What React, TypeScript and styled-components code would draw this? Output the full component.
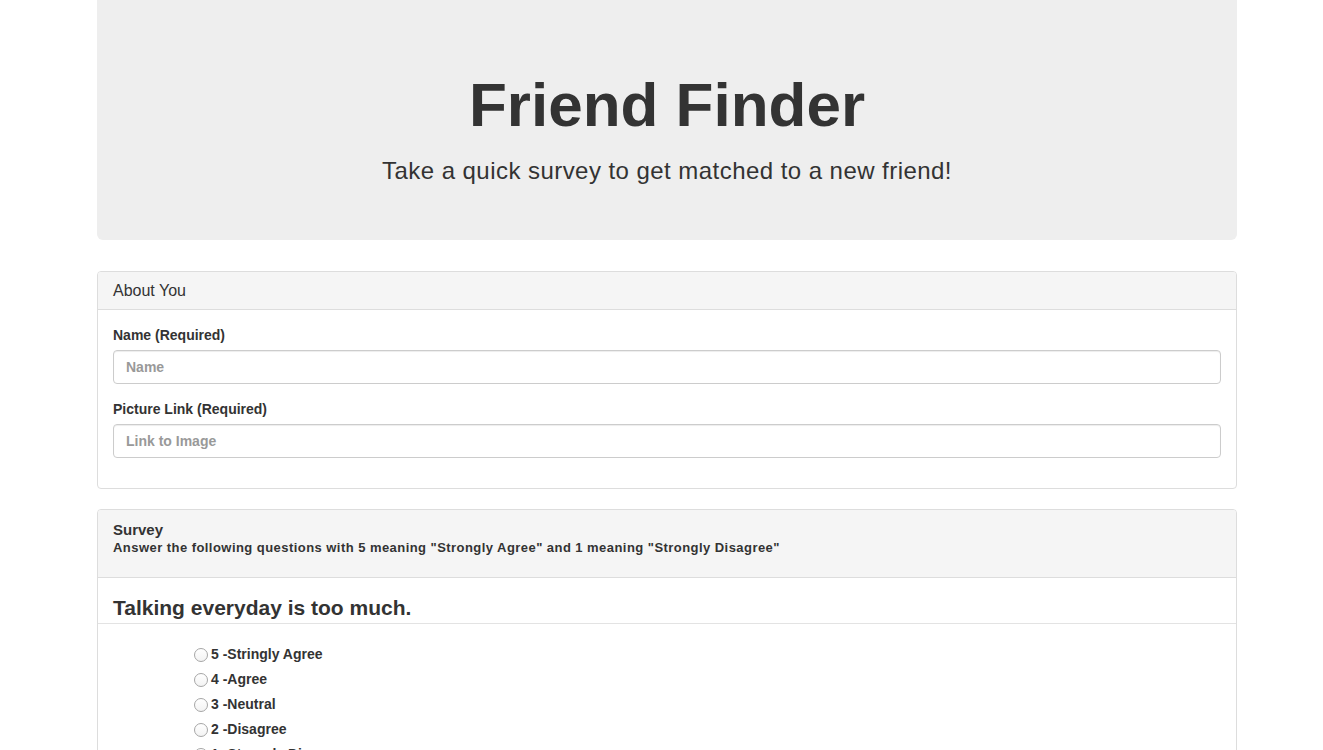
import React from "react";
import styled, { createGlobalStyle } from "styled-components";

const Global = createGlobalStyle`
  html, body { margin: 0; padding: 0; background: #fff; }
  body {
    font-family: "Liberation Sans", Arial, sans-serif;
    font-size: 14px;
    line-height: 1.42857;
    color: #333;
  }
  * { box-sizing: border-box; }
`;

const Container = styled.div`
  width: 1140px;
  margin-left: 97px;
`;

const Jumbotron = styled.header`
  background: #eee;
  border-radius: 0 0 6px 6px;
  height: 240px;
  padding: 48px 0;
  margin-bottom: 31px;
  text-align: center;
`;

const Title = styled.h1`
  margin: 23px 0 0;
  font-size: 62px;
  font-weight: 700;
  line-height: 68px;
  color: #333;
`;

const Lead = styled.p`
  margin: 17px 0 0;
  font-size: 24px;
  letter-spacing: 0.45px;
  line-height: 30px;
  color: #333;
`;

const Panel = styled.section`
  border: 1px solid #ddd;
  border-radius: 4px;
  margin-bottom: 20px;
  background: #fff;
  overflow: hidden;
`;

const PanelHeading = styled.div`
  background: #f5f5f5;
  border-bottom: 1px solid #ddd;
  padding: 10px 15px;
`;

const HeadingTitle = styled.div<{ $bold?: boolean }>`
  font-size: ${(p) => (p.$bold ? "15px" : "16px")};
  font-weight: ${(p) => (p.$bold ? 700 : 400)};
  line-height: ${(p) => (p.$bold ? "18px" : "17px")};
  margin-top: ${(p) => (p.$bold ? "1px" : "0")};
`;

const HeadingSub = styled.div`
  font-size: 13px;
  letter-spacing: 0.45px;
  font-weight: 700;
  line-height: 18px;
  margin-bottom: 10px;
`;

const PanelBody = styled.div`
  padding: 15px 15px 0;
`;

const FormGroup = styled.div`
  margin-bottom: 15px;
  &:last-child { margin-bottom: 30px; }
`;

const Label = styled.label`
  display: block;
  font-size: 14px;
  font-weight: 700;
  line-height: 20px;
  margin-bottom: 5px;
`;

const Input = styled.input`
  display: block;
  width: 100%;
  height: 34px;
  padding: 6px 12px;
  font-family: "Liberation Sans", Arial, sans-serif;
  font-size: 14px;
  font-weight: 700;
  color: #555;
  border: 1px solid #ccc;
  border-radius: 4px;
  box-shadow: inset 0 1px 1px rgba(0, 0, 0, 0.075);
  outline: none;
  &::placeholder { color: #999; font-weight: 700; }
`;

const Question = styled.h3`
  margin: 0;
  padding: 18px 15px 3px;
  font-size: 21px;
  font-weight: 700;
  line-height: 24px;
  border-bottom: 1px solid #e3e3e3;
`;

const Options = styled.div`
  padding: 18px 0 0 96px;
  display: flex;
  flex-direction: column;
`;

const Option = styled.label`
  display: flex;
  align-items: center;
  height: 25px;
  font-size: 14px;
  font-weight: 700;
`;

const Radio = styled.input`
  appearance: none;
  -webkit-appearance: none;
  width: 14px;
  height: 14px;
  margin: 0 3px 0 0;
  border: 1px solid #a6a6a6;
  border-radius: 50%;
  background: linear-gradient(#fff, #f3f3f3);
`;

const options = [
  "5 -Stringly Agree",
  "4 -Agree",
  "3 -Neutral",
  "2 -Disagree",
  "1 -Strongly Disagree",
];

export default function App() {
  return (
    <>
      <Global />
      <Container>
        <Jumbotron>
          <Title>Friend Finder</Title>
          <Lead>Take a quick survey to get matched to a new friend!</Lead>
        </Jumbotron>

        <Panel>
          <PanelHeading>
            <HeadingTitle>About You</HeadingTitle>
          </PanelHeading>
          <PanelBody>
            <FormGroup>
              <Label htmlFor="name">Name (Required)</Label>
              <Input id="name" placeholder="Name" />
            </FormGroup>
            <FormGroup>
              <Label htmlFor="photo">Picture Link (Required)</Label>
              <Input id="photo" placeholder="Link to Image" />
            </FormGroup>
          </PanelBody>
        </Panel>

        <Panel>
          <PanelHeading>
            <HeadingTitle $bold>Survey</HeadingTitle>
            <HeadingSub>
              Answer the following questions with 5 meaning "Strongly Agree" and 1 meaning "Strongly Disagree"
            </HeadingSub>
          </PanelHeading>
          <Question>Talking everyday is too much.</Question>
          <Options>
            {options.map((o) => (
              <Option key={o}>
                <Radio type="radio" name="q1" value={o} />
                {o}
              </Option>
            ))}
          </Options>
        </Panel>
      </Container>
    </>
  );
}
